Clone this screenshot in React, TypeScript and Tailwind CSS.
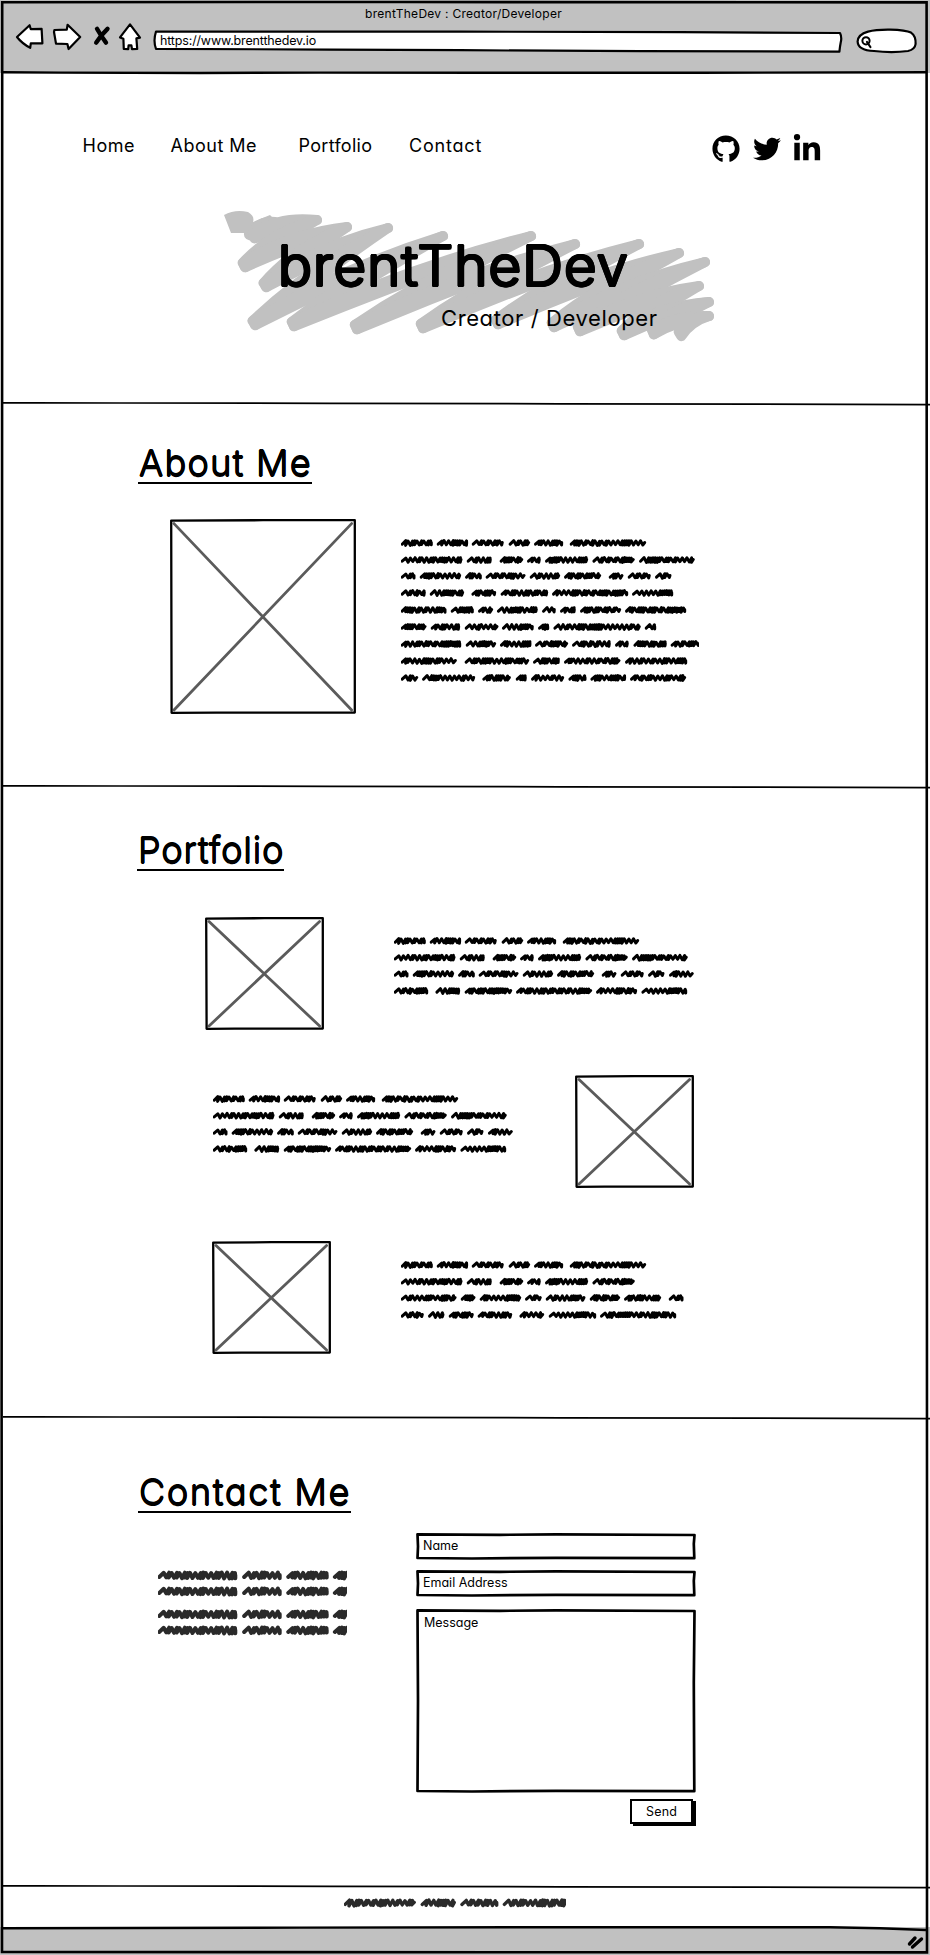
import React from "react";
import { FaGithub, FaTwitter, FaLinkedinIn } from "react-icons/fa";

/* ---------- scribbled placeholder text ---------- */

type Word = [number, number];

function scribble(x0: number, x1: number, cy: number, amp: number, step: number, seed: number) {
  let s = seed * 7919 + 13;
  const rnd = () => {
    s = (s * 1103515245 + 12345) & 0x7fffffff;
    return (s >> 8) / 0x7fffff;
  };
  let x = x0;
  let d = `M${x.toFixed(1)} ${(cy + amp * 0.5).toFixed(1)}`;
  const slant = amp * 1.5;
  while (x < x1 - slant) {
    const top = cy - amp * (0.75 + rnd() * 0.25);
    const bottom = cy + amp * (0.6 + rnd() * 0.4);
    d += `L${(x + slant).toFixed(1)} ${top.toFixed(1)}`;
    x += step * (rnd() < 0.6 ? 0.7 : 1.5);
    d += `L${Math.min(x + slant * 0.35, x1).toFixed(1)} ${bottom.toFixed(1)}`;
  }
  d += `L${x1.toFixed(1)} ${(cy - amp * 0.2).toFixed(1)}`;
  return d;
}

function Scribbles({
  rows,
  ys,
  width,
  height,
  amp = 2.4,
  step = 3.1,
  stroke = 3,
  color = "#000",
  sameRows = false,
}: {
  rows: Word[][];
  ys: number[];
  width: number;
  height: number;
  amp?: number;
  step?: number;
  stroke?: number;
  color?: string;
  sameRows?: boolean;
}) {
  return (
    <svg width={width} height={height} viewBox={`0 0 ${width} ${height}`} className="block shrink-0" aria-hidden="true">
      {rows.map((row, r) =>
        row.map(([a, b], i) => (
          <path
            key={`${r}-${i}`}
            d={scribble(a + 1.2, b - 1, ys[r], amp, step, sameRows ? i + 3 : r * 11 + i + 1)}
            fill="none"
            stroke={color}
            strokeWidth={stroke}
            strokeLinecap="round"
            strokeLinejoin="round"
          />
        )),
      )}
    </svg>
  );
}

const third = (row: number[][], offset: number, scale = 3): Word[] =>
  row.map(([a, b]) => [(a - offset) / scale, (b - offset) / scale]);

const ABOUT: Word[][] = [
  [[65, 159], [173, 265], [278, 372], [389, 451], [465, 550], [572, 799]],
  [[65, 248], [263, 336], [362, 430], [444, 483], [498, 625], [640, 765], [780, 945]],
  [[65, 107], [122, 244], [258, 306], [320, 437], [452, 541], [555, 664], [689, 731], [746, 813], [828, 875]],
  [[65, 138], [152, 253], [277, 349], [365, 505], [519, 745], [759, 880]],
  [[65, 200], [215, 282], [297, 340], [354, 474], [489, 528], [543, 588], [603, 724], [738, 919]],
  [[65, 140], [155, 241], [257, 356], [369, 462], [477, 508], [523, 783], [797, 829]],
  [[65, 244], [260, 349], [363, 455], [468, 565], [579, 693], [708, 747], [763, 861], [875, 970]],
  [[65, 231], [257, 448], [462, 540], [555, 722], [738, 922]],
  [[65, 115], [129, 286], [310, 393], [410, 441], [456, 553], [568, 620], [634, 739], [753, 919]],
].map((r) => third(r, 65));

const WORK: Word[][] = [
  ABOUT[0],
  ABOUT[1],
  [...ABOUT[2], third([[891, 963]], 65)[0]],
  third([[65, 166], [190, 262], [278, 418], [432, 658], [672, 793], [808, 943]], 65),
];

const WORK_LAST: Word[][] = [
  ABOUT[0],
  ABOUT[1].slice(0, 6),
  third([[65, 230], [245, 287], [302, 424], [438, 486], [500, 617], [632, 721], [735, 844], [869, 911]], 65),
  third([[65, 132], [147, 194], [209, 282], [296, 397], [421, 493], [509, 649], [663, 889]], 65),
];

const CONTACT_ROW: Word[] = third([[85, 320], [340, 453], [472, 594], [612, 680]], 85);
const FOOTER_ROW: Word[] = [[0, 71.2], [77, 111.3], [116.7, 153.7], [159.2, 226]];

/* ---------- sketched shapes ---------- */

function ImageBox({ w, h }: { w: number; h: number }) {
  return (
    <svg width={w} height={h} viewBox={`0 0 ${w} ${h}`} className="block shrink-0" aria-hidden="true">
      <path
        d={`M4 4.6L${w - 4.4} ${h - 4}M${w - 4.4} 4.6L4 ${h - 4}`}
        stroke="#5b5b5b"
        strokeWidth="2.8"
        strokeLinecap="round"
      />
      <path
        d={`M1.2 1.6L${w / 2} 1.2L${w - 1.2} 1.2V${h - 1.4}L${w / 4} ${h - 1.3}L1.6 ${h - 1.2}Z`}
        fill="none"
        stroke="#000"
        strokeWidth="2.3"
        strokeLinejoin="round"
      />
    </svg>
  );
}

function Field({ label, w, h, multiline = false }: { label: string; w: number; h: number; multiline?: boolean }) {
  return (
    <div className={multiline ? "relative h-[184px] w-[280px]" : "relative h-[27px] w-[280px]"}>
      <svg width={w} height={h} viewBox={`0 0 ${w} ${h}`} className="absolute inset-0" aria-hidden="true">
        <path
          d={`M1.5 1.4L${w * 0.3} 1.8L${w * 0.5} 1.4L${w - 1.5} 2L${w - 2.2} ${h * 0.4}L${w - 1.7} ${h - 1.8}L${w * 0.5} ${h - 2.2}L${w * 0.2} ${h - 1.5}L1.5 ${h - 2}L2 ${h * 0.5}Z`}
          fill="#fff"
          stroke="#000"
          strokeWidth="2.7"
          strokeLinejoin="round"
        />
      </svg>
      <span
        className={
          multiline
            ? "relative block pl-[8px] pt-[4px] text-[12.5px] leading-[20px]"
            : "relative block pl-[7px] text-[12.5px] leading-[25px]"
        }
      >
        {label}
      </span>
    </div>
  );
}

function Divider() {
  return (
    <svg width="930" height="4" viewBox="0 0 930 4" className="block shrink-0" aria-hidden="true">
      <path d="M3 0.8L120 1L330 1.3L560 1.8L760 2.2L930 2.6" fill="none" stroke="#000" strokeWidth="1.7" />
    </svg>
  );
}

function Heading({ children, className }: { children: React.ReactNode; className: string }) {
  return (
    <h2
      className={`w-fit whitespace-nowrap border-b-2 border-black text-[36px] font-light leading-[38px] [text-shadow:0.6px_0_#000,-0.6px_0_#000,0_0.6px_#000,0_-0.6px_#000] ${className}`}
    >
      {children}
    </h2>
  );
}

/* ---------- browser chrome ---------- */

function Chrome() {
  const line = { fill: "#fff", stroke: "#000", strokeWidth: 2.2, strokeLinejoin: "round" as const };
  return (
    <header className="h-[73px] shrink-0 bg-[#c1c1c1] pt-[4px]">
      <div className="h-[18px] text-center text-[12px] leading-[19px] tracking-[0.28px]">
        <span className="mr-[3px]">brentTheDev : Creator/Developer</span>
      </div>
      <div className="flex h-[34px] items-start pl-[14px]">
        <svg width="31" height="34" viewBox="14 22 31 34" aria-label="Back">
          <path {...line} d="M17 37L29.6 25.2L30.8 29.2L41.6 28.8L42.4 43.4L30.8 43.4L30.2 47.8Q22 43.5 17 37Z" />
        </svg>
        <svg width="32" height="34" viewBox="14 22 32 34" className="ml-[6px]" aria-label="Forward">
          <g transform="translate(-37 0)">
            <path {...line} d="M54.4 30L66.8 29.6L67.6 24.8L80.2 37L68.6 49L67.4 44L56 43.6L54 32Z" />
          </g>
        </svg>
        <svg width="20" height="34" viewBox="92 22 20 34" className="ml-[9px]" aria-label="Stop">
          <path
            d="M97 28.8Q101 36 106 42.6M107.5 28.8Q101 35 96.2 42.6"
            fill="none"
            stroke="#000"
            strokeWidth="4.4"
            strokeLinecap="round"
          />
        </svg>
        <svg width="25" height="34" viewBox="118 22 25 34" className="ml-[6px]" aria-label="Home">
          <path
            {...line}
            d="M130 24.4L140 37.6L136.4 38.4L137.2 49L132 49.2L131.4 45.4L128.6 45.4L128.2 49.2L123.8 49L123.4 38.8L120 37.4Z"
          />
        </svg>
        <div className="relative ml-[9px] h-[34px] w-[692px]">
          <svg width="692" height="34" viewBox="152 22 692 34" className="absolute inset-0" aria-hidden="true">
            <path
              {...line}
              d="M156 31.5L460 31.6L680 32.2L840 33Q842 37 840.8 42Q840 46 839.4 51.6L640 51.2L460 50.2L330 49.6L156 48.8Q153 41 156 31.5Z"
            />
          </svg>
          <span className="relative block whitespace-nowrap pl-[8px] text-[12.5px] leading-[37px] tracking-[-0.16px]">
            https://www.brentthedev.io
          </span>
        </div>
        <svg width="64" height="34" viewBox="855 22 64 34" className="ml-[11px]" aria-label="Search">
          <path
            {...line}
            d="M868 31.6Q876 29.4 890 29.6Q906 30 911 32.6Q916 36 915.6 44Q915 49.4 908 51Q892 53.2 874 51Q858 50.4 857.6 41.5Q858 34.4 868 31.6Z"
          />
          <circle cx="866" cy="40.8" r="3.6" fill="none" stroke="#000" strokeWidth="2" />
          <path d="M867 42L870.4 47" stroke="#000" strokeWidth="2.2" strokeLinecap="round" />
        </svg>
      </div>
    </header>
  );
}

function Frame() {
  return (
    <svg
      width="930"
      height="1955"
      viewBox="0 0 930 1955"
      className="pointer-events-none absolute inset-0"
      aria-hidden="true"
    >
      <path
        d="M2.2 2.2L400 2L926.6 2.4L926.8 900L927 1500L927 1952.4L500 1952.2L2 1952L1.6 1400L2 700Z"
        fill="none"
        stroke="#000"
        strokeWidth="2.6"
      />
      <path
        d="M3 72.2L60 72.6L200 73L320 72.6L480 72.8L700 72.8L926 72.2"
        fill="none"
        stroke="#000"
        strokeWidth="2.4"
      />
      <path d="M3 1928.2L300 1927.6L600 1927.2L830 1927.2L880 1928.2L926 1930" fill="none" stroke="#000" strokeWidth="2.4" />
      <path
        d="M909.5 1944L915 1938M912.5 1947L921.5 1939"
        fill="none"
        stroke="#000"
        strokeWidth="3.4"
        strokeLinecap="round"
      />
    </svg>
  );
}

/* ---------- hero backdrop ---------- */

/* alternating upper and lower turning points of the brush */
const HERO_POINTS: Word[] = [
  [60, 22], [39, 36], [102, 20], [29, 65], [132, 27], [50, 85], [173, 28], [39, 123], [228, 36], [78, 124],
  [316, 36], [141, 127], [360, 44], [207, 126], [424, 44], [282, 122], [464, 53], [338, 125], [490, 62],
  [364, 129], [484, 86], [408, 133], [494, 102], [438, 132], [494, 116], [465, 134],
];

function HeroScribble() {
  const strokes = HERO_POINTS.slice(1).map((point, i) => {
    const other = HERO_POINTS[i];
    const [top, bottom] = other[1] < point[1] ? [other, point] : [point, other];
    const dx = bottom[0] - top[0];
    const dy = bottom[1] - top[1];
    const len = Math.hypot(dx, dy);
    const nx = dy / len;
    const ny = -dx / len;
    const cx = (top[0] + bottom[0]) / 2 - 5;
    const cy = (top[1] + bottom[1]) / 2 - 6;
    const bulge = len > 60 ? 6.5 : 3;
    return (
      `M${top[0]} ${top[1]}Q${cx + nx * bulge} ${cy + ny * bulge} ${bottom[0] + nx * 2.5} ${bottom[1] + ny * 2.5}` +
      `L${bottom[0] - nx * 2.5} ${bottom[1] - ny * 2.5}Q${cx - nx * bulge} ${cy - ny * bulge} ${top[0]} ${top[1]}Z`
    );
  });
  return (
    <svg width="510" height="150" viewBox="0 0 510 150" className="col-start-1 row-start-1" aria-hidden="true">
      <path d="M9 15Q20 9 33 12Q40 16 38 22L55 15L64 24L38 41Q28 40 29 33L16 33Z" fill="#c1c1c1" />
      {strokes.map((d) => (
        <path key={d} d={d} fill="#c1c1c1" stroke="#c1c1c1" strokeWidth="10" strokeLinejoin="round" />
      ))}
    </svg>
  );
}

/* ---------- page ---------- */

export default function App() {
  return (
    <div className="relative flex h-[1955px] w-[930px] flex-col overflow-hidden bg-white font-['Inter','Lato',sans-serif] text-black [font-feature-settings:'cv11'_1,'calt'_0]">
      <Chrome />

      <section className="h-[329px] shrink-0">
        <div className="flex pl-[82.5px] pt-[59px]">
          <nav className="flex w-[629.5px] whitespace-nowrap text-[18px] leading-[28px] tracking-[0.5px]">
            <a className="w-[88px]">Home</a>
            <a className="w-[128px]">About Me</a>
            <a className="w-[110.5px] tracking-[0.3px]">Portfolio</a>
            <a className="tracking-[0.8px]">Contact</a>
          </nav>
          <div className="flex h-[33px] items-center">
            <FaGithub className="h-[28px] w-[28px]" />
            <FaTwitter className="ml-[13px] h-[28px] w-[28px]" />
            <FaLinkedinIn className="ml-[12px] h-[30px] w-[28px]" />
          </div>
        </div>
        <div className="ml-[215px] mt-[35px] grid w-[510px]">
          <HeroScribble />
          <div className="col-start-1 row-start-1 pt-[36px]">
            <h1 className="whitespace-nowrap pl-[63px] text-[56.5px] font-light leading-[60px] tracking-[1px] [text-shadow:1.4px_0_#000,-1.4px_0_#000,0_1.4px_#000,0_-1.4px_#000,1px_1px_#000,-1px_1px_#000,1px_-1px_#000,-1px_-1px_#000]">
              brentTheDev
            </h1>
            <p className="whitespace-nowrap pl-[226px] pt-[8px] text-[22px] leading-[28px] tracking-[0.6px]">
              Creator / Developer
            </p>
          </div>
        </div>
      </section>

      <Divider />

      <section className="h-[379px] shrink-0">
        <Heading className="ml-[138px] mt-[38px] pl-[1px] tracking-[1.3px]">About Me</Heading>
        <div className="flex pl-[170px] pt-[35px]">
          <ImageBox w={186} h={195} />
          <div className="pl-[45px] pt-[16px]">
            <Scribbles
              rows={ABOUT}
              ys={[8, 25, 41, 58, 75, 92, 109, 126, 143]}
              width={298}
              height={152}
            />
          </div>
        </div>
      </section>

      <Divider />

      <section className="h-[627px] shrink-0">
        <Heading className="ml-[137px] mt-[42px] pl-[1px] tracking-[0.9px]">Portfolio</Heading>
        <div className="flex pl-[205px] pt-[46px]">
          <ImageBox w={119} h={113} />
          <div className="pl-[70px] pt-[16px]">
            <Scribbles rows={WORK} ys={[8, 24.7, 41, 58]} width={305} height={66} />
          </div>
        </div>
        <div className="flex pl-[213px] pt-[45px]">
          <div className="pt-[16px]">
            <Scribbles rows={WORK} ys={[8, 24.7, 41, 58]} width={305} height={66} />
          </div>
          <div className="pl-[57px]">
            <ImageBox w={119} h={113} />
          </div>
        </div>
        <div className="flex pl-[212px] pt-[53px]">
          <ImageBox w={119} h={113} />
          <div className="pl-[70px] pt-[16px]">
            <Scribbles rows={WORK_LAST} ys={[8, 24.7, 41, 58]} width={305} height={66} />
          </div>
        </div>
      </section>

      <Divider />

      <section className="h-[465px] shrink-0">
        <Heading className="ml-[138px] mt-[53px] pl-[1px] tracking-[1.7px]">Contact Me</Heading>
        <div className="flex items-start pt-[20px]">
          <div className="w-[416px] pl-[158px] pt-[34px]">
            <Scribbles
              rows={[CONTACT_ROW, CONTACT_ROW, CONTACT_ROW, CONTACT_ROW]}
              ys={[8.5, 24.5, 47.5, 63.5]}
              width={189}
              height={72}
              amp={3}
              step={3.6}
              stroke={4}
              color="#2a2a2a"
              sameRows
            />
          </div>
          <form className="w-[280px]">
            <Field label="Name" w={280} h={27} />
            <div className="h-[10px]" />
            <Field label="Email Address" w={280} h={27} />
            <div className="h-[12px]" />
            <Field label="Message" w={280} h={184} multiline />
            <div className="flex justify-end pt-[6px]">
              <button
                type="button"
                className="mr-[3px] h-[25px] w-[63px] border-2 border-black bg-white text-[12.5px] leading-[21px] tracking-[0.2px] shadow-[3px_2px_0_0_#000]"
              >
                Send
              </button>
            </div>
          </form>
        </div>
      </section>

      <Divider />

      <footer className="flex grow flex-col">
        <div className="h-[38px] shrink-0 pl-[344px] pt-[5px]">
          <Scribbles
            rows={[FOOTER_ROW]}
            ys={[9]}
            width={222}
            height={18}
            amp={2.9}
            step={3.3}
            stroke={3.4}
            color="#2a2a2a"
          />
        </div>
        <div className="grow bg-[#c1c1c1]" />
      </footer>

      <Frame />
    </div>
  );
}
